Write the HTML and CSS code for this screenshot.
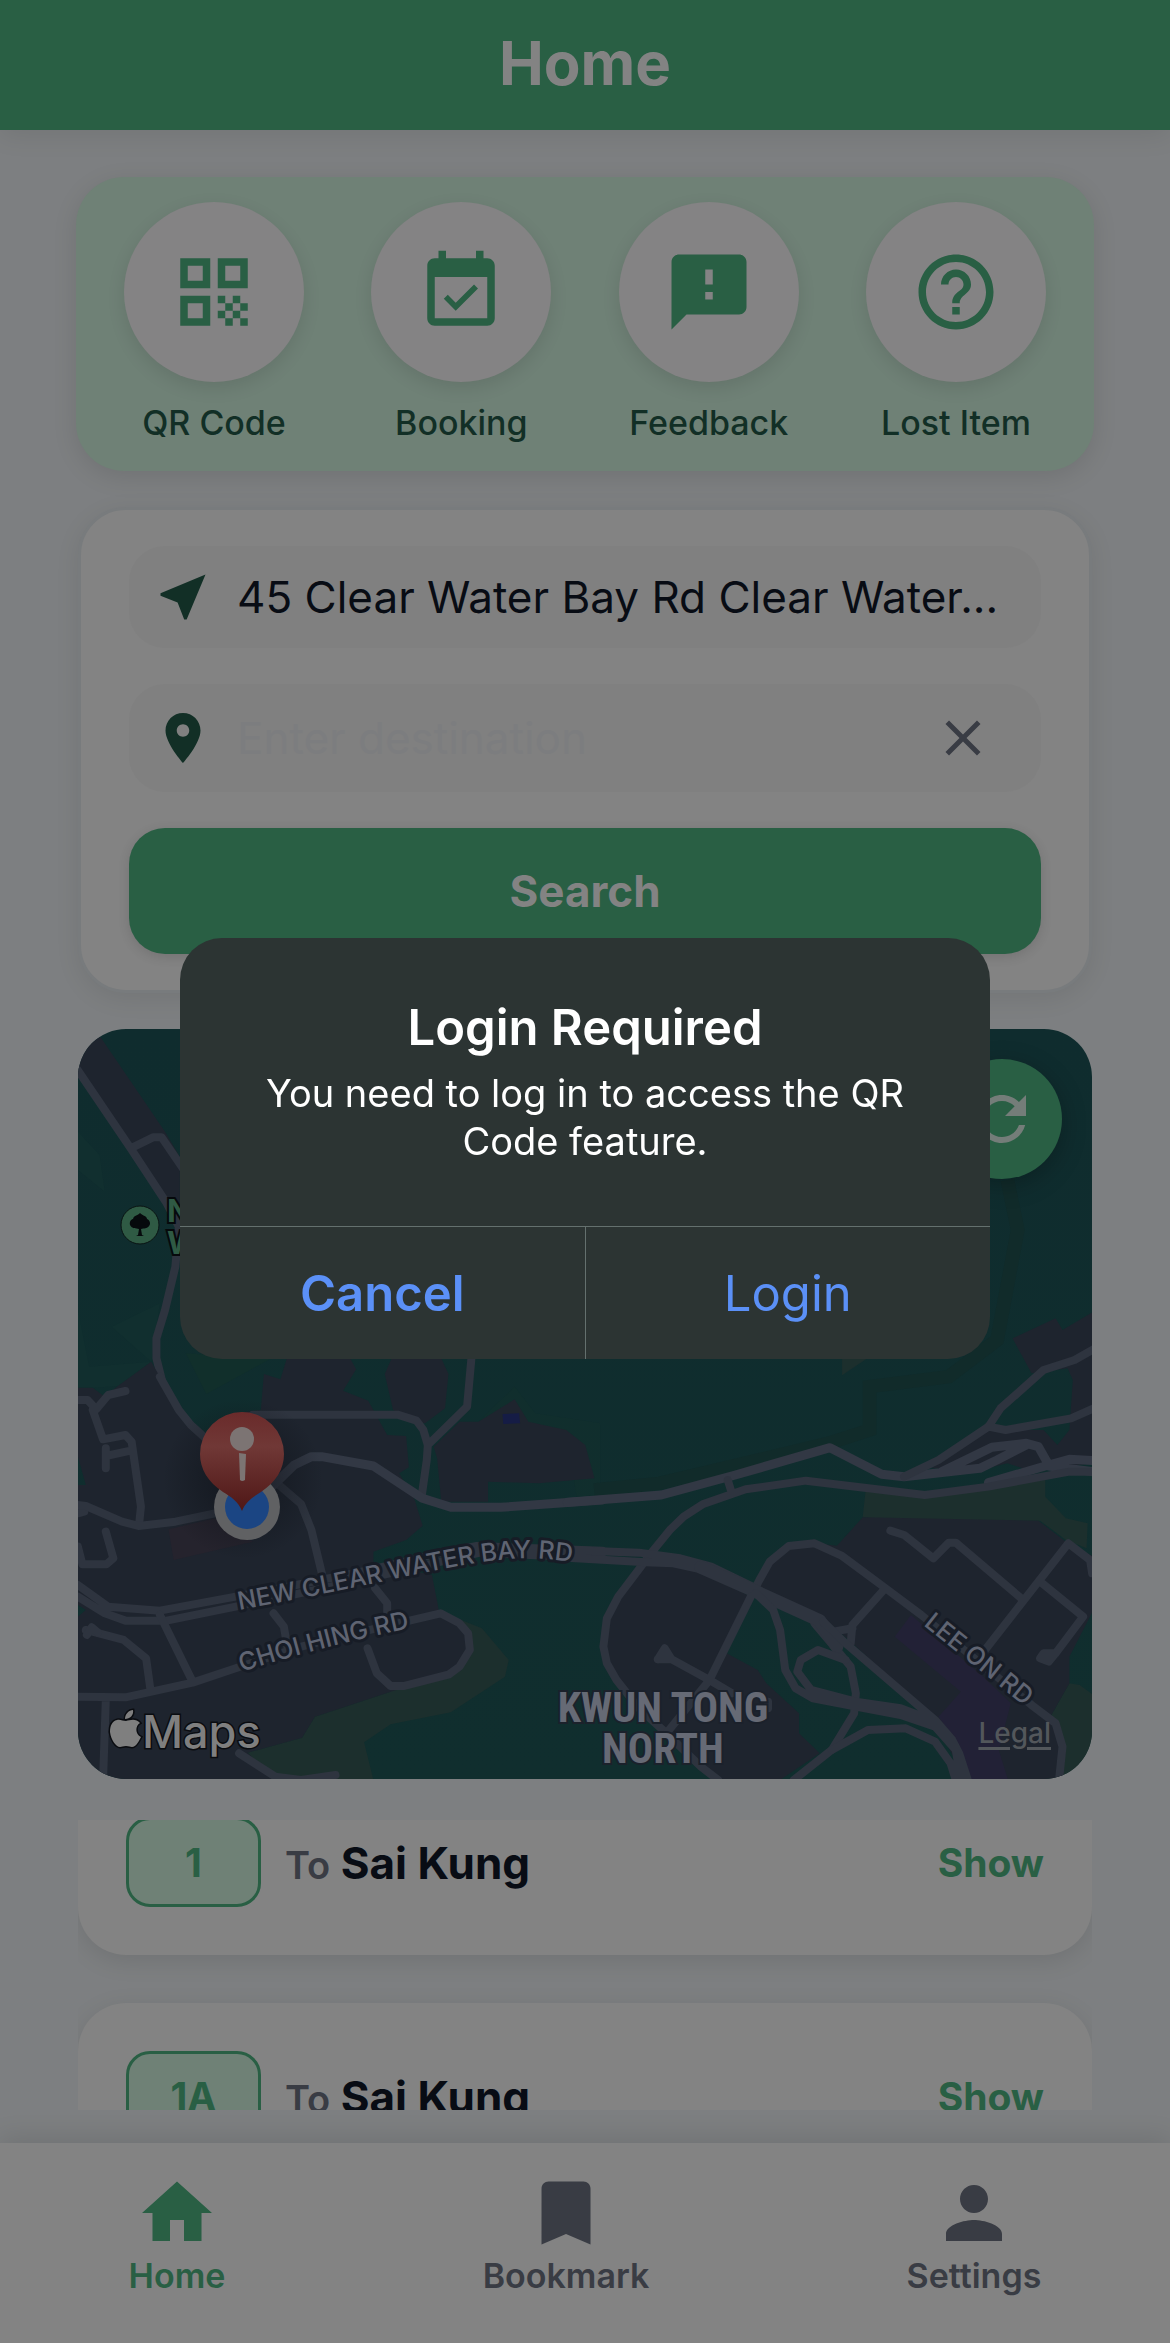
FILE: index.html
```html
<!DOCTYPE html>
<html lang="en">
<head>
<meta charset="utf-8">
<meta name="viewport" content="width=device-width, initial-scale=1">
<title>Home</title>
<link rel="stylesheet" href="styles.css">
</head>
<body>
<div class="app">
  <header class="topbar"><h1>Home</h1></header>

  <main class="content">
    <section class="actions" aria-label="Quick actions">
      <button class="action" type="button">
        <span class="action-disc"><svg viewBox="0 0 24 24"><path d="M3 11h8V3H3v8zm2-6h4v4H5V5zM3 21h8v-8H3v8zm2-6h4v4H5v-4zM13 3v8h8V3h-8zm6 6h-4V5h4v4zM19 19h2v2h-2zM13 13h2v2h-2zM15 15h2v2h-2zM13 17h2v2h-2zM15 19h2v2h-2zM17 17h2v2h-2zM17 13h2v2h-2zM19 15h2v2h-2z"/></svg></span>
        <span>QR Code</span>
      </button>
      <button class="action" type="button">
        <span class="action-disc"><svg viewBox="0 0 24 24"><path d="M16.53 11.06L15.47 10l-4.88 4.88-2.12-2.12-1.06 1.06L10.59 17l5.94-5.94zM19 3h-1V1h-2v2H8V1H6v2H5c-1.11 0-1.99.9-1.99 2L3 19c0 1.1.89 2 2 2h14c1.1 0 2-.9 2-2V5c0-1.1-.9-2-2-2zm0 16H5V8h14v11z"/></svg></span>
        <span>Booking</span>
      </button>
      <button class="action" type="button">
        <span class="action-disc"><svg viewBox="0 0 24 24"><path d="M20 2H4c-1.1 0-1.99.9-1.99 2L2 22l4-4h14c1.1 0 2-.9 2-2V4c0-1.1-.9-2-2-2zm-7 12h-2v-2h2v2zm0-4h-2V6h2v4z"/></svg></span>
        <span>Feedback</span>
      </button>
      <button class="action" type="button">
        <span class="action-disc"><svg viewBox="0 0 24 24"><path d="M11 18h2v-2h-2v2zm1-16C6.48 2 2 6.48 2 12s4.48 10 10 10 10-4.48 10-10S17.52 2 12 2zm0 18c-4.41 0-8-3.59-8-8s3.59-8 8-8 8 3.59 8 8-3.59 8-8 8zm0-14c-2.21 0-4 1.79-4 4h2c0-1.1.9-2 2-2s2 .9 2 2c0 2-3 1.75-3 5h2c0-2.25 3-2.5 3-5 0-2.21-1.79-4-4-4z"/></svg></span>
        <span>Lost Item</span>
      </button>
    </section>

    <div class="panels">
      <form class="search">
        <button class="field field-origin" type="button">
          <svg viewBox="0 0 24 24"><path d="M21 3L3 10.53v.98l6.84 2.65L12.48 21h.98L21 3z"/></svg>
          <span>45 Clear Water Bay Rd Clear Water...</span>
        </button>
        <div class="field field-destination">
          <svg viewBox="0 0 24 24"><path d="M12 2C8.13 2 5 5.13 5 9c0 5.25 7 13 7 13s7-7.75 7-13c0-3.87-3.13-7-7-7zm0 9.5c-1.38 0-2.5-1.12-2.5-2.5s1.12-2.5 2.5-2.5 2.5 1.12 2.5 2.5-1.12 2.5-2.5 2.5z"/></svg>
          <input type="text" placeholder="Enter destination" aria-label="Destination">
          <button class="clear" type="button" aria-label="Clear destination">
            <svg viewBox="0 0 24 24"><path d="M19 6.41L17.59 5 12 10.59 6.41 5 5 6.41 10.59 12 5 17.59 6.41 19 12 13.41 17.59 19 19 17.59 13.41 12z"/></svg>
          </button>
        </div>
        <button class="search-submit" type="submit">Search</button>
      </form>

      <section class="map" aria-label="Map">
        <svg class="map-canvas" viewBox="0 0 1014 750" preserveAspectRatio="xMidYMid slice">
          <defs>
            <linearGradient id="pin" x1="0" y1="0" x2="0" y2="1">
              <stop offset="0" stop-color="#6a2b2b"/><stop offset=".35" stop-color="#703836"/><stop offset="1" stop-color="#4f1716"/>
            </linearGradient>
            <linearGradient id="land" x1="0" y1="0" x2="0" y2="1">
              <stop offset="0" stop-color="#0f2c2e"/><stop offset="1" stop-color="#102e2e"/>
            </linearGradient>
            <radialGradient id="shade"><stop offset="0" stop-color="#0d1016" stop-opacity=".7"/><stop offset="1" stop-color="#0d1016" stop-opacity="0"/></radialGradient>
            <path id="ncwb" d="M161 581 C220 570 260 562 302 553 S385 535 420 531 S470 530 510 535"/>
            <path id="choi" d="M164 643 Q225 622 350 595"/>
            <path id="leeon" d="M845 596 L970 696"/>
          </defs>
          <rect width="1014" height="750" fill="url(#land)"/>

          <!-- north-west land -->
          <g transform="translate(-18 -19) scale(.3444 .3333)">
            <path class="meadow" d="M52 365L115 435L130 545L52 480zM150 950L290 880L265 1055L85 1070L52 900V1133H100L170 1128L265 1055z"/>
            <path class="grass" d="M365 1030L610 1047L425 1152z"/>
            <path class="block" d="M52 200V90L118 82L305 365L348 440V620L300 560L205 415L60 185z"/>
            <path class="road" d="M50 178L205 415L310 580L345 650L335 770L305 900L280 985V1045L297 1115L345 1205M205 415L270 382H295L360 480"/>
          </g>

          <!-- south-west blocks and roads -->
          <g transform="translate(-18 351) scale(.3444 .3333)">
            <path class="grass" d="M1215 125L1320 20L1380 100L1568 130V345L1500 350L1470 150z" opacity=".5"/>
            <path class="park" d="M1100 690L1165 720L1225 745L1303 840L1292 890L1135 997L960 1033L883 1087L910 1200H620L545 1118L703 1073L740 1010L960 935z"/>
            <path class="block" d="M52 23H95L130 50L165 20L265 -55L290 -10L350 100L430 180L540 95L583 90L592 -18L640 -2L660 -70H840L860 -32L822 32L895 62L950 165L1005 168L1013 262L985 280L1030 360L1053 437L1005 480L910 515V545L1080 585L1100 690L1180 740L1190 800L1165 870L960 935L740 1010L703 1073L545 1118L625 1200H52V710L75 690L52 675V315H75L52 230z"/>
            <path class="block" d="M965 -70L943 -18L967 90L1030 125L1060 130L1118 85L1128 -18L1105 -70zM1085 200L1160 125H1215L1320 58L1360 125L1470 150L1525 195L1552 295L1390 310L1243 305V365H1107L1095 235z"/>
            <path fill="#151c45" d="M1285 102L1333 100L1336 130L1287 132z"/>
            <path fill="#25232d" d="M315 448L450 415L560 485L330 540z"/>
            <path class="road" d="M52 60H80L105 88L140 45L190 33M95 90L125 178L190 165L208 185L235 380L230 430M133 205V265M133 228L205 212M133 455L155 535L135 553H65L52 500M52 400L70 395"/>
            <path class="road" d="M290 -10L345 90L380 135L450 200M52 375L75 378L180 425L228 438L335 425L460 398M560 104H980L1035 122L1055 150L1068 195L1065 240L1050 350M1068 195L1182 80L1195 -70M630 310L700 372L730 450L765 600"/>
            <path class="road major" d="M600 335L680 255L730 230H760L910 258L1052 355L1135 382H1280L1575 360"/>
            <path class="road" d="M52 615L140 680L290 692L510 650L700 612L900 570L1100 520L1210 498L1575 512M52 650L130 700L190 722H310L510 680L720 635L1000 570L1220 518L1575 535"/>
            <path class="road" d="M290 705L385 905M620 700L650 740L660 800M915 625L950 670V730M52 950L190 952L385 908L510 865L700 800L900 750L1105 700L1160 730L1185 760L1190 810L1160 860L1130 883L1000 918H960L920 880L893 805M75 750L185 780L250 835L262 925M133 960L125 1200M520 1120L625 1190L700 1200L800 1185"/>
            <path class="road" d="M78 765L92 742L110 758"/>
          </g>

          <!-- eastern blocks and roads -->
          <g transform="translate(492 351) scale(.3444 .3333)">
            <path fill="none" stroke="#112b2a" stroke-width="40" d="M1270 -600L1300 -450L1240 -120L1100 -10L870 20V150L750 190L260 310L70 330"/>
            <path class="park" d="M790 -70H870L790 -14z"/>
            <path class="park" d="M858 335L1030 350L1380 300V350L1440 415L1503 430L1500 505L1440 480L1365 422H930L850 410zM1450 910L1480 915L1520 945V1200L1430 1190L1440 1100L1395 1010z"/>
            <path class="block" d="M1285 -125L1410 -185L1430 -150L1520 -205V250L1330 270L1270 250L1190 270L1050 265L1215 130L1270 150H1375L1415 195L1450 150L1460 0L1445 -35L1340 -20z"/>
            <path class="block" d="M775 497L850 412L1360 422L1440 485L1520 530V690L1450 830V910L1395 1010L1440 1100L1430 1200H1150L1050 1010L820 790L770 745L735 715L540 630L580 545L635 490H710z"/>
            <path class="block" d="M220 550L300 555L380 570L525 650L455 820L545 870L570 910L665 1000V1060L725 1120L610 1200H430L280 1060L150 910L97 810L107 715z"/>
            <path fill="#222136" d="M990 705L1200 890L1280 970L1245 1110L1272 1200H1150L1130 1100L1070 1010L1135 935L943 770z"/>
            <path class="road major" d="M-8 367L265 345L480 285L755 203L905 283L970 290L1190 265L1240 240L1325 195M1080 275L1225 202L1325 190L1360 200L1390 255M1390 258L1516 275M1215 308L1390 255L1450 238L1520 242"/>
            <path class="road" d="M235 520L290 450L330 410L385 373L510 328L685 302L1030 345L1215 320L1450 275H1520M458 300L470 340M235 520L140 650L107 715L97 800L107 850L135 900L200 985L280 1060L380 1160L430 1200M970 290L1070 240L1215 140L1250 85L1375 -30L1465 -60L1520 -92M1215 140L1265 150L1455 115L1520 85"/>
            <path class="road" d="M-8 510L200 518L320 535L410 560L530 620M-8 533L220 547L300 550L380 568L530 635M710 730L775 810L815 860L830 940L825 1000L760 1110L650 1200M530 640L550 600L580 545L635 498L710 490L790 528L910 620L1020 705L1340 975L1410 1030L1430 1100L1420 1200M915 625L820 735L815 790M765 755L820 745"/>
            <path class="road trunk" d="M380 562L530 630L725 722L775 800"/>
            <path class="road" d="M735 725L800 790L1060 1020L1110 1080L1130 1120L1155 1200M540 640L590 690L610 750L625 870L655 925L705 955L830 980L960 1005L1060 1040L1120 1110L1135 1200M800 840L720 810L670 840L660 875L700 930L830 965L960 985L1050 1020M760 1110L865 1050L975 1045L1060 1085L1105 1150L1120 1200M525 650L405 900L280 1060M255 838L275 805L295 838L255 838M295 838L405 900L470 940M575 965V985"/>
            <path class="road" d="M930 452L970 465L1055 535L1100 488H1120L1310 655M1205 810L1447 490L1510 540L1516 580M1365 605L1490 710L1410 820L1390 845L1365 835L1375 820L1410 820"/>
          </g>

          <!-- road and district names -->
          <text class="road-name"><textPath href="#ncwb">NEW CLEAR WATER BAY RD</textPath></text>
          <text class="road-name"><textPath href="#choi">CHOI HING RD</textPath></text>
          <text class="road-name"><textPath href="#leeon">LEE ON RD</textPath></text>
          <text class="district" x="585" y="693">KWUN TONG</text>
          <text class="district" x="585" y="734">NORTH</text>

          <!-- park marker -->
          <circle cx="62" cy="196" r="19" fill="#2f5a44" stroke="#0a1413"/>
          <path fill="#06090c" d="M60 206L61 200C58 199 54 200 52 196C51 192 54 190 55 190C56 186 59 187 62 184C65 187 69 187 69 190C72 191 73 195 71 197C69 200 66 199 63 200L64 206L66 207H58z"/>
          <text class="park-name" x="89" y="193">N</text>
          <text class="park-name" x="89" y="225">W</text>

          <!-- current position and pin -->
          <circle cx="165" cy="450" r="80" fill="url(#shade)"/>
          <circle cx="169" cy="478" r="33" fill="#606163"/>
          <circle cx="169" cy="478" r="22" fill="#1b4583"/>
          <path fill="url(#pin)" d="M164 482C160 472 153 468 145 463C130 453 122 440 122 425A42 42 0 0 1 206 425C206 440 198 453 183 463C175 468 168 472 164 482z"/>
          <circle cx="164" cy="410" r="12" fill="#7c7473"/>
          <path fill="#7c7473" d="M161 424L168 425L167 451Q164 453 162 451z"/>

          <!-- map provider -->
          <g class="provider">
            <path d="M48 692C45 692 42 690 39 691C34 692 32 697 32 703C33 711 38 718 42 718C44 718 45 717 48 717C51 717 52 718 54 718C58 718 61 712 63 708C57 705 57 697 62 694C58 689 52 691 48 692zM47 690C47 685 51 681 55 681C56 686 52 690 47 690z"/>
            <text x="64" y="719">Maps</text>
          </g>
        </svg>
        <button class="refresh" type="button" aria-label="Refresh">
          <svg viewBox="0 0 24 24"><path d="M17.65 6.35C16.2 4.9 14.21 4 12 4c-4.42 0-7.99 3.58-7.99 8s3.57 8 7.99 8c3.73 0 6.84-2.55 7.73-6h-2.08c-.82 2.33-3.04 4-5.65 4-3.31 0-6-2.69-6-6s2.69-6 6-6c1.66 0 3.14.69 4.22 1.78L13 11h7V4l-2.35 2.35z"/></svg>
        </button>
        <a class="legal" href="#legal">Legal</a>
      </section>
    </div>

    <section class="routes" aria-label="Routes">
      <ul class="routes-track">
        <li class="route">
          <span class="route-no">1</span>
          <span class="route-to"><small>To</small> Sai Kung</span>
          <button class="show" type="button">Show</button>
        </li>
        <li class="route">
          <span class="route-no">1A</span>
          <span class="route-to"><small>To</small> Sai Kung</span>
          <button class="show" type="button">Show</button>
        </li>
      </ul>
    </section>
  </main>

  <nav class="tabbar" aria-label="Main">
    <a class="tab active" href="#home"><svg viewBox="0 0 24 24"><path d="M10 20v-6h4v6h5v-8h3L12 3 2 12h3v8z"/></svg><span>Home</span></a>
    <a class="tab" href="#bookmark"><svg viewBox="0 0 24 24"><path d="M17 3H7c-1.1 0-1.99.9-1.99 2L5 21l7-3 7 3V5c0-1.1-.9-2-2-2z"/></svg><span>Bookmark</span></a>
    <a class="tab" href="#settings"><svg viewBox="0 0 24 24"><path d="M12 12c2.21 0 4-1.79 4-4s-1.79-4-4-4-4 1.79-4 4 1.79 4 4 4zm0 2c-2.67 0-8 1.34-8 4v2h16v-2c0-2.66-5.33-4-8-4z"/></svg><span>Settings</span></a>
  </nav>
</div>

<div class="overlay">
  <div class="alert" role="alertdialog" aria-modal="true" aria-labelledby="alert-title" aria-describedby="alert-text">
    <div class="alert-body">
      <h2 id="alert-title">Login Required</h2>
      <p id="alert-text">You need to log in to access the QR Code feature.</p>
    </div>
    <div class="alert-actions">
      <button class="cancel" type="button">Cancel</button>
      <button type="button">Login</button>
    </div>
  </div>
</div>
</body>
</html>
```
FILE: styles.css
```css
:root {
  --page: #7d7f81;
  --surface: #838383;
  --field: #808080;
  --green: #295f44;
  --green-soft: #6f8176;
  --green-dark: #122f26;
  --ink: #080c14;
  --muted: #393c44;
}

* { box-sizing: border-box; }

body {
  margin: 0;
  background: var(--page);
  color: var(--ink);
  font-family: Inter, Roboto, "Liberation Sans", sans-serif;
}

button, input { font: inherit; color: inherit; border: 0; padding: 0; margin: 0; background: none; }
svg { display: block; fill: currentColor; }
h1, h2, p, ul { margin: 0; padding: 0; }

.app { display: flex; flex-direction: column; height: 100vh; }

.topbar {
  display: flex;
  align-items: center;
  justify-content: center;
  height: 130px;
  padding-bottom: 4px;
  flex: none;
  background: var(--green);
  color: var(--surface);
  box-shadow: 0 6px 24px rgba(0, 0, 0, .08);
}
.topbar h1 { font-size: 60px; line-height: 72px; font-weight: 700; }

.content {
  flex: 1;
  min-height: 0;
  display: flex;
  flex-direction: column;
  gap: 36px;
  padding: 47px 76px 33px;
}

.actions {
  display: flex;
  justify-content: space-between;
  flex: none;
  padding: 25px 48px 26px;
  border-radius: 48px;
  background: var(--green-soft);
  box-shadow: 0 6px 24px rgba(0, 0, 0, .1);
}
.action {
  display: flex;
  flex-direction: column;
  align-items: center;
  gap: 18px;
  color: var(--green-dark);
  font-size: 34px;
  line-height: 45px;
  font-weight: 500;
}
.action-disc {
  display: grid;
  place-items: center;
  width: 180px;
  height: 180px;
  border-radius: 50%;
  background: #848384;
  color: var(--green);
  box-shadow: 0 6px 18px rgba(0, 0, 0, .1);
}
.action-disc svg { width: 90px; height: 90px; }

.panels { display: flex; flex-direction: column; gap: 36px; flex: none; padding: 0 2px; }

.search {
  display: flex;
  flex-direction: column;
  gap: 36px;
  padding: 36px 48px;
  border: 3px solid #787b7d;
  border-radius: 48px;
  background: var(--surface);
  box-shadow: 0 6px 24px rgba(0, 0, 0, .08);
}
.field {
  display: flex;
  align-items: center;
  gap: 24px;
  padding: 0 48px 0 24px;
  border-radius: 36px;
  background: var(--field);
  font-size: 44px;
  text-align: left;
}
.field svg { width: 60px; height: 60px; flex: none; color: var(--green-dark); }
.field-origin { height: 102px; white-space: nowrap; }
.field-destination { height: 108px; }
.field input { flex: 1; min-width: 0; height: 60px; outline: 0; }
.field input::placeholder { color: #7c7d7f; opacity: 1; }
.field .clear svg { color: var(--muted); }
.search-submit {
  height: 126px;
  border-radius: 36px;
  background: var(--green);
  color: var(--surface);
  font-size: 44px;
  font-weight: 700;
  box-shadow: 0 3px 12px rgba(0, 0, 0, .12);
}

.map { position: relative; height: 750px; border-radius: 48px; overflow: hidden; }
.map-canvas { width: 100%; height: 100%; }
.block { fill: #1e242e; }
.park { fill: #1c2f2d; }
.grass { fill: #112f2b; }
.meadow { fill: #112f2f; }
.road {
  fill: none;
  stroke: #2e343f;
  stroke-width: 8;
  stroke-linecap: round;
  stroke-linejoin: round;
  vector-effect: non-scaling-stroke;
}
.major { stroke: #323844; stroke-width: 9; }
.trunk { stroke-width: 13; }
.road-name {
  font-size: 25px;
  font-weight: 500;
  fill: #5f6472;
  stroke: #171c26;
  stroke-width: 6;
  stroke-linejoin: round;
  paint-order: stroke;
}
.district {
  font-family: "Liberation Sans Narrow", "Roboto Condensed", Roboto, sans-serif;
  font-size: 42px;
  font-weight: 700;
  text-anchor: middle;
  fill: #666a75;
  stroke: #1b212b;
  stroke-width: 4;
  paint-order: stroke;
}
.park-name { font-size: 31px; font-weight: 700; fill: #2f5a44; stroke: #06090c; stroke-width: 4; paint-order: stroke; }
.provider { fill: #7f7f7f; stroke: #0a0c10; stroke-width: 3; paint-order: stroke; font-size: 45px; font-weight: 500; }
.refresh {
  position: absolute;
  top: 30px;
  right: 30px;
  display: grid;
  place-items: center;
  width: 120px;
  height: 120px;
  border-radius: 50%;
  background: var(--green);
  color: #747d79;
  box-shadow: 0 6px 24px rgba(0, 0, 0, .25);
}
.refresh svg { width: 72px; height: 72px; }
.legal {
  position: absolute;
  right: 41px;
  bottom: 29px;
  color: #53575b;
  font-size: 28px;
  line-height: 33px;
  font-weight: 500;
  text-decoration-thickness: 3px;
  text-underline-offset: 4px;
}

.routes { flex: 1; min-height: 0; overflow: hidden; margin: 5px 2px 0; }
/* the list is shown part-way through a scroll */
.routes-track { display: flex; flex-direction: column; gap: 48px; margin-top: -51px; list-style: none; }
.route {
  display: flex;
  align-items: center;
  gap: 24px;
  height: 186px;
  flex: none;
  padding: 0 48px;
  border-radius: 48px;
  background: var(--surface);
  box-shadow: 0 6px 24px rgba(0, 0, 0, .1);
}
.route-no {
  display: grid;
  place-items: center;
  width: 135px;
  height: 90px;
  border: 3px solid var(--green);
  border-radius: 24px;
  background: var(--green-soft);
  color: var(--green);
  font-size: 39px;
  font-weight: 700;
}
.route-to { flex: 1; padding-top: 4px; font-size: 44px; line-height: 54px; font-weight: 700; }
.route-to small { font-size: 38px; font-weight: 600; color: var(--muted); }
.show { color: var(--green); font-size: 39px; font-weight: 700; }

.tabbar {
  display: flex;
  justify-content: space-around;
  align-items: flex-start;
  flex: none;
  height: 200px;
  padding-top: 28px;
  background: var(--surface);
  box-shadow: 0 -6px 24px rgba(0, 0, 0, .1);
}
.tab {
  display: flex;
  flex-direction: column;
  align-items: center;
  color: var(--muted);
  font-size: 34px;
  line-height: 42px;
  font-weight: 600;
  text-decoration: none;
}
.tab svg { width: 84px; height: 84px; }
.tab.active { color: var(--green); }

.overlay { position: fixed; inset: 0; display: flex; align-items: center; justify-content: center; padding-bottom: 46px; }
.alert {
  width: 810px;
  max-width: 90%;
  border-radius: 42px;
  overflow: hidden;
  background: #2c3433;
  color: #fff;
}
.alert-body { padding: 60px 72px 48px; text-align: center; }
.alert h2 { font-size: 49px; line-height: 60px; font-weight: 600; }
.alert p { margin-top: 11px; font-size: 38px; line-height: 48px; padding-bottom: 13px; }
.alert-actions { display: flex; border-top: 1px solid #64706e; }
.alert-actions button { flex: 1; height: 132px; font-size: 49px; color: #5b90f7; }
.alert-actions button + button { border-left: 1px solid #64706e; }
.alert-actions .cancel { font-weight: 600; }
```
